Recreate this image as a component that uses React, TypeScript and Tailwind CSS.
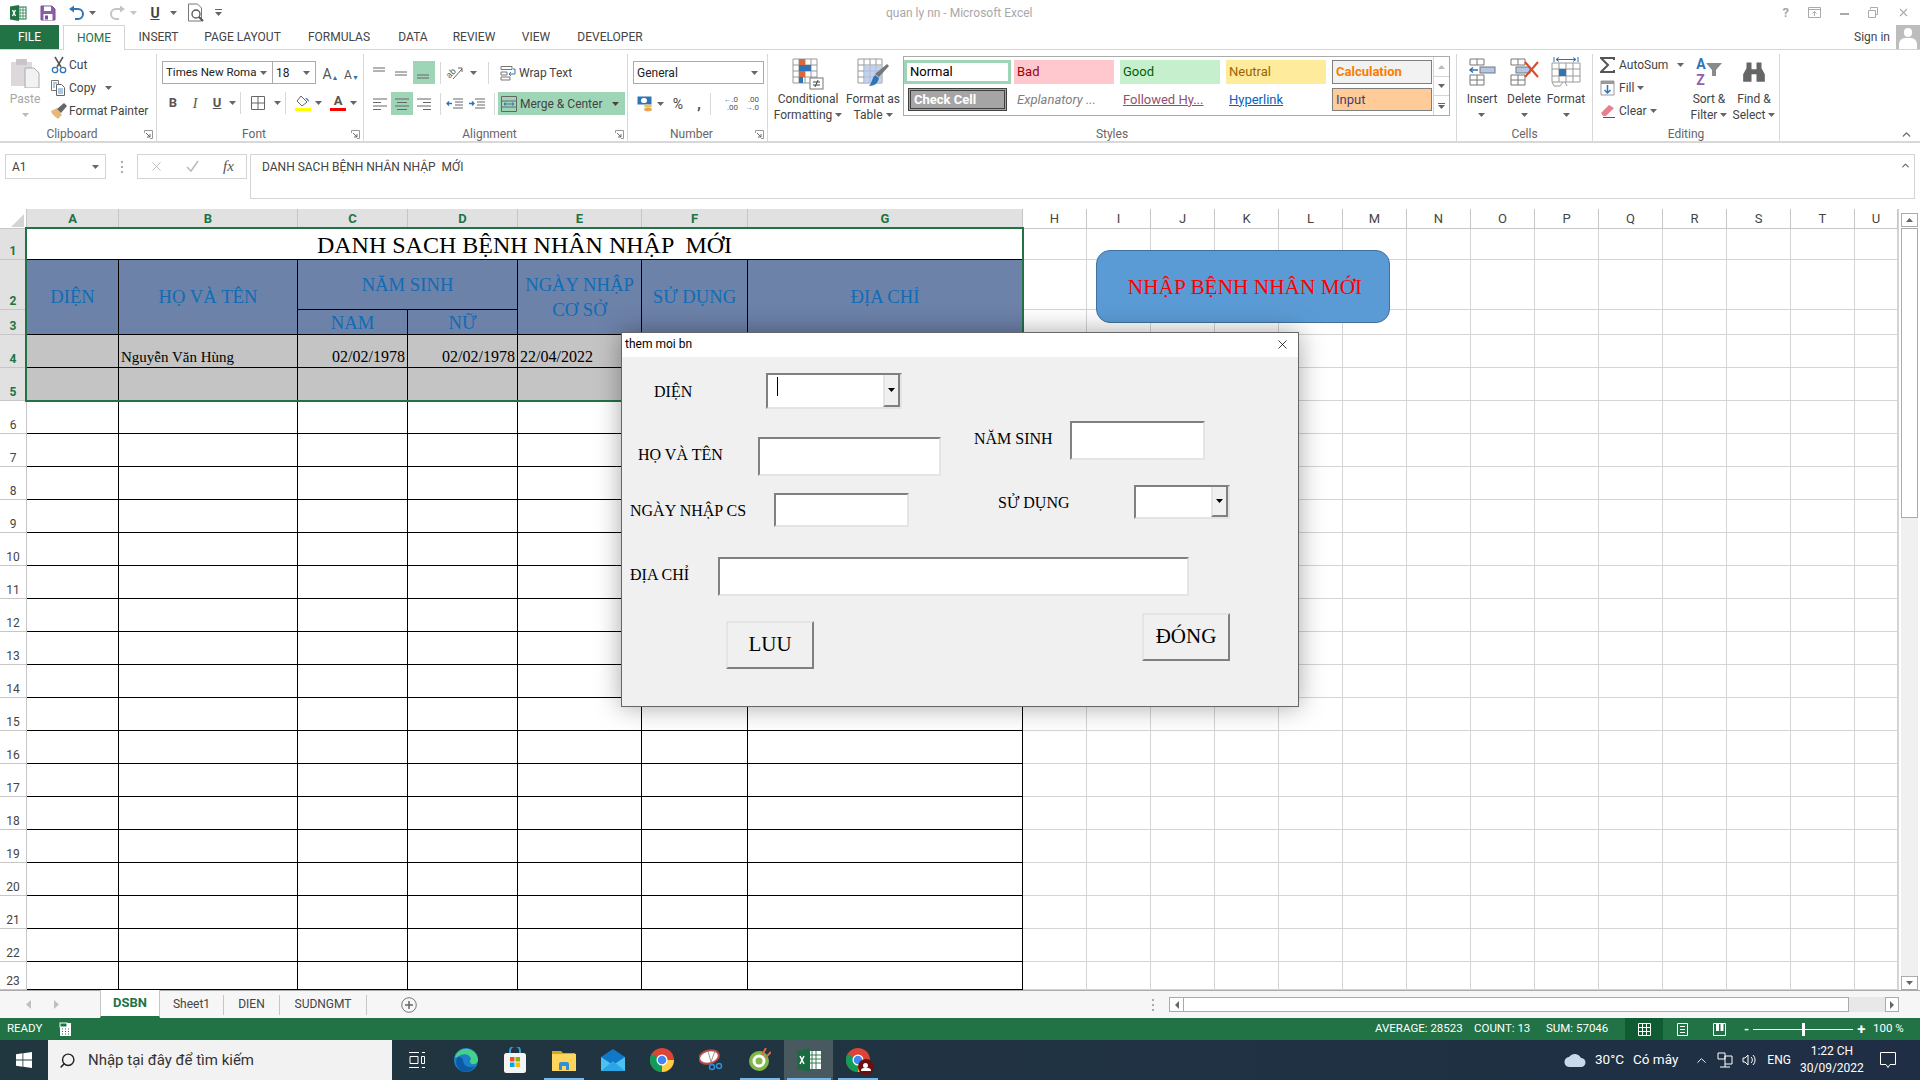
import React from "react";
import { ChevronUp, Search, X as XIcon } from "lucide-react";

const SERIF = "font-['Liberation_Serif',serif]";

function Caret({ c = "#666", className = "" }: { c?: string; className?: string }) {
  return (
    <svg width="7" height="4" viewBox="0 0 7 4" className={"shrink-0 " + className}>
      <path d="M0 0h7L3.5 4z" fill={c} />
    </svg>
  );
}

function Lines({ kind }: { kind: string }) {
  const ys: Record<string, number[][]> = {
    top: [[2, 14, 3], [2, 14, 6]],
    mid: [[2, 14, 7], [2, 14, 10]],
    bot: [[2, 14, 10], [2, 14, 13]],
    left: [[2, 16, 3], [2, 10, 6.5], [2, 16, 10], [2, 10, 13.5]],
    center: [[2, 16, 3], [4, 14, 6.5], [2, 16, 10], [4, 14, 13.5]],
    right: [[2, 16, 3], [8, 16, 6.5], [2, 16, 10], [8, 16, 13.5]],
  };
  return (
    <svg width="18" height="16" viewBox="0 0 18 16">
      {ys[kind].map((l, i) => (
        <path key={i} d={`M${l[0]} ${l[2]}H${l[1]}`} stroke="#666" strokeWidth="1" />
      ))}
    </svg>
  );
}

function Launcher() {
  return (
    <svg width="9" height="9" viewBox="0 0 9 9" className="shrink-0">
      <path d="M.5 3V.5H8.500V8.500H6" fill="none" stroke="#999" />
      <path d="M2 3l4 4M6 4v3H3" fill="none" stroke="#666" />
    </svg>
  );
}

function Group({ w, label, launcher, children }: { w: string; label: string; launcher?: boolean; children: React.ReactNode }) {
  return (
    <div className={w + " mt-1 flex h-[87px] shrink-0 flex-col border-r border-[#d8d8d8]"}>
      <div className="flex h-[73px] min-h-0">{children}</div>
      <div className={"flex h-[14px] items-center " + (launcher ? "pr-[3px]" : "")}>
        <span className="flex-1 text-center text-[12px] leading-[14px] text-[#666]">{label}</span>
        {launcher && <Launcher />}
      </div>
    </div>
  );
}

function Sep({ className = "" }: { className?: string }) {
  return <div className={"h-[22px] w-px shrink-0 bg-[#d8d8d8] " + className} />;
}

function Box({ w, on, children }: { w: string; on?: boolean; children: React.ReactNode }) {
  return (
    <div className={w + " flex h-[23px] shrink-0 items-center justify-center " + (on ? "bg-[#9fd5b7]" : "")}>{children}</div>
  );
}

function BigLabel({ a, b, caret }: { a: string; b?: string; caret?: boolean }) {
  return (
    <div className="flex flex-col items-center text-[12px] leading-[16px] text-[#444]">
      <span className="whitespace-nowrap">{a}</span>
      <span className="flex h-[16px] items-center gap-[3px] whitespace-nowrap">
        {b}
        {caret && <Caret />}
      </span>
    </div>
  );
}

const Logo = () => (
  <svg width="18" height="18" viewBox="0 0 18 18">
    <rect x="8" y="3" width="9" height="12" fill="#fff" stroke="#217346" />
    <path d="M11 3v12M14 3v12M8 6h9M8 9h9M8 12h9" stroke="#217346" strokeWidth=".7" />
    <path d="M1 2.500 10 1v16l-9-1.500z" fill="#217346" />
    <path d="M3.500 6l3 6M6.500 6l-3 6" stroke="#fff" strokeWidth="1.300" />
  </svg>
);

function QuickAccess() {
  return (
    <div className="flex h-[25px] items-center text-[12px]">
      <div className="ml-[9px] w-[30px]"><Logo /></div>
      <svg width="16" height="16" viewBox="0 0 16 16" className="ml-[1px]">
        <path d="M1 1h11l3 3v11H1z" fill="#8b5fa8" stroke="#7b4f9a" />
        <rect x="4" y="1.500" width="7" height="4.500" fill="#fff" />
        <rect x="3.500" y="9" width="9" height="6" fill="#fff" />
        <rect x="5" y="10.500" width="3" height="4" fill="#7b4f9a" />
      </svg>
      <svg width="17" height="16" viewBox="0 0 17 16" className="ml-[12px]">
        <path d="M4 4h6a5 5 0 0 1 0 10H7" fill="none" stroke="#2f75b5" strokeWidth="2" />
        <path d="M1 4l5-3.500v7z" fill="#2f75b5" />
      </svg>
      <Caret className="ml-[4px]" />
      <svg width="17" height="16" viewBox="0 0 17 16" className="ml-[13px]">
        <path d="M13 4H7a5 5 0 0 0 0 10h3" fill="none" stroke="#c4c4c4" strokeWidth="2" />
        <path d="M16 4l-5-3.500v7z" fill="#c4c4c4" />
      </svg>
      <Caret c="#c4c4c4" className="ml-[4px]" />
      <span className="ml-[12px] w-[12px] text-center text-[14px] font-bold leading-[14px] text-[#444] underline">U</span>
      <Caret className="ml-[9px]" />
      <svg width="18" height="20" viewBox="0 0 18 20" className="ml-[10px]">
        <path d="M1.500 1h9l4 4v13h-13z" fill="#fff" stroke="#777" />
        <circle cx="9" cy="11" r="4" fill="#fff" stroke="#555" strokeWidth="1.300" />
        <path d="M12 14l4 4" stroke="#555" strokeWidth="2" />
      </svg>
      <div className="ml-[10px] flex flex-col items-center gap-[2px]">
        <div className="h-px w-[7px] bg-[#666]" />
        <Caret />
      </div>
      <div className="ml-[664px] whitespace-nowrap text-[12px] text-[#a8a8a8]">quan ly nn - Microsoft Excel</div>
      <div className="ml-auto flex items-center gap-[19px] pr-[10px] text-[#a8a8a8]">
        <span className="text-[13px] font-bold">?</span>
        <svg width="13" height="11" viewBox="0 0 13 11"><path d="M.5.5h12v10H.5zM.5 2.500h12M6.500 9V4.500M4.500 6.500l2-2 2 2" fill="none" stroke="#aaa" /></svg>
        <div className="mt-[3px] h-[2px] w-[9px] bg-[#aaa]" />
        <svg width="10" height="11" viewBox="0 0 10 11"><path d="M2.500 2.500V.5h7v7H7.500M.5 3.500h7v7h-7z" fill="none" stroke="#aaa" /></svg>
        <XIcon size={13} color="#aaa" />
      </div>
    </div>
  );
}

function TabsRow() {
  const tabs = ["INSERT", "PAGE LAYOUT", "FORMULAS", "DATA", "REVIEW", "VIEW", "DEVELOPER"];
  const ws = ["w-[67px]", "w-[101px]", "w-[92px]", "w-[56px]", "w-[66px]", "w-[58px]", "w-[90px]"];
  return (
    <div className="flex h-[25px] items-stretch border-b border-[#d4d4d4] text-[12px]">
      <div className="flex w-[59px] items-center justify-center bg-[#217346] text-white">FILE</div>
      <div className="z-10 ml-[4px] flex h-[25px] w-[62px] items-center justify-center border border-b-0 border-[#d4d4d4] bg-white text-[#217346]">HOME</div>
      {tabs.map((t, i) => (
        <div key={t} className={ws[i] + " flex items-center justify-center text-[#444]"}>{t}</div>
      ))}
      <div className="flex flex-1 items-center justify-end text-[#444]">
        <span className="mr-[6px]">Sign in</span>
        <div className="mr-0 flex h-[24px] w-[24px] flex-col items-center overflow-hidden bg-[#bdbdbd]">
          <div className="mt-[3px] h-[10px] w-[8px] rounded-full bg-white" />
          <div className="mt-[1px] h-[12px] w-[18px] rounded-t-[6px] bg-white" />
        </div>
      </div>
    </div>
  );
}

function Clipboard() {
  return (
    <Group w="w-[157px]" label="Clipboard" launcher>
      <div className="flex w-[50px] flex-col items-center pt-[4px] text-[12px] leading-[16px] text-[#a6a6a6]">
        <svg width="30" height="30" viewBox="0 0 30 30" className="shrink-0">
          <rect x="1" y="4" width="21" height="24" fill="#dcd8dc" />
          <rect x="6" y="1" width="11" height="6" rx="1" fill="#c8c4c8" />
          <path d="M15 10h9l5 5v15H15z" fill="#f2f2f2" stroke="#aaa" />
        </svg>
        <span className="mt-[3px]">Paste</span>
        <Caret c="#bbb" className="mt-[6px]" />
      </div>
      <div className="-mt-px flex flex-col text-[12px] text-[#444]">
        <div className="flex h-[23px] items-center">
          <svg width="18" height="18" viewBox="0 0 18 18">
            <path d="M5 1l6 10M13 1L7 11" stroke="#555" strokeWidth="1.500" />
            <circle cx="5" cy="14" r="2.700" fill="none" stroke="#2f75b5" strokeWidth="1.300" />
            <circle cx="13" cy="14" r="2.700" fill="none" stroke="#2f75b5" strokeWidth="1.300" />
          </svg>
          <span className="ml-[1px]">Cut</span>
        </div>
        <div className="flex h-[23px] items-center">
          <svg width="18" height="18" viewBox="0 0 18 18">
            <path d="M1.500 1.500h7v10h-7z" fill="#fff" stroke="#777" />
            <path d="M6.500 5.500h5l3 3v8h-8z" fill="#fff" stroke="#666" />
            <path d="M8 10h5M8 12h5M8 14h5M3 4h4M3 6h2M3 8h2" stroke="#2f75b5" strokeWidth=".8" />
          </svg>
          <span className="ml-[1px]">Copy</span>
          <Caret className="ml-[9px]" />
        </div>
        <div className="flex h-[23px] items-center">
          <svg width="18" height="18" viewBox="0 0 18 18">
            <path d="M1 9l6-3 5 7-4 4C6 15 2 13 1 9z" fill="#e8b77a" />
            <path d="M7 7l7-6 3 3-6 7z" fill="#666" />
          </svg>
          <span className="ml-[1px] whitespace-nowrap">Format Painter</span>
        </div>
      </div>
    </Group>
  );
}

function FontGroup() {
  return (
    <Group w="w-[207px]" label="Font" launcher>
      <div className="flex flex-col pl-[5px] pt-[7px]">
        <div className="flex h-[23px] items-center">
          <div className="flex h-[23px] w-[111px] items-center border border-[#ababab] pl-[3px] pr-[5px] text-[12px] text-[#222]">
            <span className="flex-1 whitespace-nowrap text-[11.500px]">Times New Roma</span>
            <Caret />
          </div>
          <div className="flex h-[23px] w-[43px] items-center border border-l-0 border-[#ababab] pl-[3px] pr-[5px] text-[12px] text-[#222]">
            <span className="flex-1">18</span>
            <Caret />
          </div>
          <div className="ml-[4px] flex h-[23px] w-[21px] items-end justify-center pb-[3px] text-[14px] leading-[14px] text-[#555]">A<sup className="text-[7px] text-[#2f75b5]">▲</sup></div>
          <div className="flex h-[23px] w-[21px] items-end justify-center pb-[3px] text-[12px] leading-[12px] text-[#555]">A<sup className="text-[7px] text-[#2f75b5]">▼</sup></div>
        </div>
        <div className="mt-[8px] flex h-[22px] items-center text-[#555]">
          <Box w="w-[22px]"><span className="text-[13px] font-bold">B</span></Box>
          <Box w="w-[22px]"><span className={"text-[14px] italic " + SERIF}>I</span></Box>
          <Box w="w-[22px]"><span className="text-[13px] font-bold underline">U</span></Box>
          <Caret className="ml-[1px]" />
          <Sep className="ml-[4px]" />
          <Box w="w-[33px]">
            <svg width="14" height="14" viewBox="0 0 14 14"><path d="M.5.5h13v13H.5zM7 .5v13M.5 7h13" fill="none" stroke="#666" /></svg>
          </Box>
          <Caret />
          <Sep className="ml-[4px]" />
          <div className="ml-[9px] flex flex-col items-center">
            <svg width="16" height="12" viewBox="0 0 16 12"><path d="M6 1l6 6-5 4-5-5z" fill="#fff" stroke="#666" /><path d="M10 3c3 0 4 2 4 4z" fill="#2f75b5" /></svg>
            <div className="mt-[1px] h-[3px] w-[16px] bg-[#ffff00]" />
          </div>
          <Caret className="ml-[4px]" />
          <div className="ml-[8px] flex flex-col items-center">
            <span className="text-[13px] font-bold leading-[12px]">A</span>
            <div className="mt-[1px] h-[3px] w-[16px] bg-[#ff0000]" />
          </div>
          <Caret className="ml-[4px]" />
        </div>
      </div>
    </Group>
  );
}

function AlignmentGroup() {
  return (
    <Group w="w-[264px]" label="Alignment" launcher>
      <div className="flex flex-col pl-[5px] pt-[7px] text-[12px] text-[#444]">
        <div className="flex h-[23px] items-center">
          <Box w="w-[22px]"><Lines kind="top" /></Box>
          <Box w="w-[22px]"><Lines kind="mid" /></Box>
          <Box w="w-[22px]" on><Lines kind="bot" /></Box>
          <Sep className="ml-[5px]" />
          <div className="flex h-[23px] w-[28px] shrink-0 items-center pl-[5px]">
            <span className="-rotate-45 text-[9px] leading-[10px] text-[#666]">ab</span>
            <svg width="11" height="15" viewBox="0 0 11 15" className="-ml-[4px] shrink-0">
              <path d="M1 14L10 4M6 3h4v4" fill="none" stroke="#666" />
            </svg>
          </div>
          <Caret className="ml-[1px]" />
          <Sep className="ml-[11px]" />
          <svg width="16" height="16" viewBox="0 0 16 16" className="ml-[11px]">
            <path d="M1 1.500h11v3H1zM1 7h6v3H1zM1 12h9v3H1z" fill="none" stroke="#777" />
            <path d="M13 4h2v5H9M11 7L9 9l2 2" fill="none" stroke="#2f75b5" />
          </svg>
          <span className="ml-[3px]">Wrap Text</span>
        </div>
        <div className="mt-[8px] flex h-[23px] items-center">
          <Box w="w-[22px]"><Lines kind="left" /></Box>
          <Box w="w-[22px]" on><Lines kind="center" /></Box>
          <Box w="w-[22px]"><Lines kind="right" /></Box>
          <Sep className="ml-[5px]" />
          <svg width="18" height="12" viewBox="0 0 18 12" className="ml-[5px]">
            <path d="M7 1h10M9 4h8M9 7h8M7 10h10" stroke="#666" />
            <path d="M6 5.500H1M3 3.500l-2 2 2 2" fill="none" stroke="#2f75b5" strokeWidth="1.300" />
          </svg>
          <svg width="18" height="12" viewBox="0 0 18 12" className="ml-[4px]">
            <path d="M7 1h10M9 4h8M9 7h8M7 10h10" stroke="#666" />
            <path d="M1 5.500h5M4 3.500l2 2-2 2" fill="none" stroke="#2f75b5" strokeWidth="1.300" />
          </svg>
          <Sep className="ml-[8px]" />
          <div className="ml-[3px] flex h-[23px] w-[127px] items-center bg-[#9fd5b7] pl-[3px]">
            <svg width="16" height="16" viewBox="0 0 16 16">
              <path d="M.5.5h15v15H.5zM.5 5h15M.5 11h15" fill="none" stroke="#666" />
              <path d="M3 8h10M5 6.500L3 8l2 1.500M11 6.500L13 8l-2 1.500" fill="none" stroke="#2f75b5" />
            </svg>
            <span className="ml-[3px] whitespace-nowrap">Merge &amp; Center</span>
            <Caret c="#444" className="ml-[10px]" />
          </div>
        </div>
      </div>
    </Group>
  );
}

function NumberGroup() {
  return (
    <Group w="w-[140px]" label="Number" launcher>
      <div className="flex flex-col pl-[5px] pt-[7px] text-[#444]">
        <div className="flex h-[23px] w-[131px] items-center border border-[#ababab] pl-[3px] pr-[5px] text-[12px] text-[#222]">
          <span className="flex-1">General</span>
          <Caret />
        </div>
        <div className="mt-[8px] flex h-[23px] items-center">
          <svg width="18" height="18" viewBox="0 0 18 18" className="ml-[4px]">
            <path d="M.5 1.500h14v8H.5z" fill="#2f75b5" />
            <rect x="4" y="3" width="6" height="5" rx="2.500" fill="#fff" />
            <ellipse cx="11" cy="11" rx="4" ry="1.800" fill="#f0c070" />
            <ellipse cx="11" cy="14.500" rx="4" ry="1.800" fill="#e8a84c" />
          </svg>
          <Caret className="ml-[2px]" />
          <span className="ml-[6px] w-[16px] text-center text-[14px] leading-[14px]">%</span>
          <span className="ml-[8px] w-[10px] text-center text-[14px] font-bold leading-[14px]">,</span>
          <Sep className="ml-[6px]" />
          <div className="ml-[7px] flex w-[20px] flex-col items-end text-[8px] leading-[8px] text-[#555]">
            <span><span className="text-[#2f75b5]">←</span>.0</span>
            <span>.00</span>
          </div>
          <div className="ml-[1px] flex w-[20px] flex-col items-end text-[8px] leading-[8px] text-[#555]">
            <span>.00</span>
            <span><span className="text-[#2f75b5]">→</span>.0</span>
          </div>
        </div>
      </div>
    </Group>
  );
}

function StyleBox({ w, cls, children, ml = "" }: { w: string; cls: string; children: React.ReactNode; ml?: string }) {
  return (
    <div className={w + " " + ml + " flex shrink-0 items-center overflow-hidden whitespace-nowrap pl-[3px] text-[13px] " + cls}>{children}</div>
  );
}

function Styles() {
  return (
    <Group w="w-[689px]" label="Styles">
      <div className="flex w-[80px] flex-col items-center pt-[4px]">
        <svg width="32" height="32" viewBox="0 0 32 32" className="mb-[1px] shrink-0">
          <path d="M1 1h24v24H1zM1 7h24M1 13h24M1 19h24M7 1v24M13 1v24M19 1v24" fill="none" stroke="#999" />
          <rect x="7" y="1" width="6" height="6" fill="#d9683b" />
          <rect x="7" y="7" width="12" height="6" fill="#2f75b5" />
          <rect x="7" y="13" width="6" height="6" fill="#d9683b" />
          <rect x="7" y="19" width="4" height="6" fill="#2f75b5" />
          <rect x="18" y="20" width="13" height="11" fill="#fff" stroke="#777" />
          <path d="M21 24h7M21 27h7M26 22l-3 7" stroke="#444" />
        </svg>
        <BigLabel a="Conditional" b="Formatting" caret />
      </div>
      <div className="flex w-[50px] flex-col items-center pt-[4px]">
        <svg width="32" height="32" viewBox="0 0 32 32" className="mb-[1px] shrink-0">
          <path d="M1 1h24v24H1zM1 7h24M1 13h24M1 19h24M7 1v24M13 1v24M19 1v24" fill="none" stroke="#999" />
          <rect x="7" y="7" width="18" height="18" fill="#b4c7e7" opacity=".8" />
          <path d="M30 6l2 2-10 11-4-3z" fill="#777" />
          <path d="M18 17l4 3c-1 5-4 8-10 8 3-3 3-8 6-11z" fill="#2f75b5" />
        </svg>
        <BigLabel a="Format as" b="Table" caret />
      </div>
      <div className="ml-[5px] mt-[2px] flex h-[60px] w-[547px] border border-[#ababab]">
        <div className="flex w-[528px] flex-col gap-[4px] pt-[3px]">
          <div className="flex h-[24px] gap-[6px]">
            <StyleBox w="w-[107px]" cls="border-[3px] border-[#9fd5b7] bg-white text-black">Normal</StyleBox>
            <StyleBox w="w-[100px]" cls="bg-[#ffc7ce] text-[#9c0006]" ml="-ml-[3px]">Bad</StyleBox>
            <StyleBox w="w-[100px]" cls="bg-[#c6efce] text-[#006100]">Good</StyleBox>
            <StyleBox w="w-[100px]" cls="bg-[#ffeb9c] text-[#9c6500]">Neutral</StyleBox>
            <StyleBox w="w-[100px]" cls="border border-[#7f7f7f] bg-[#f2f2f2] font-bold text-[#fa7d00]">Calculation</StyleBox>
          </div>
          <div className="flex h-[23px] gap-[6px]">
            <StyleBox w="w-[99px]" cls="ml-[4px] border-[3px] border-double border-[#3f3f3f] bg-[#a5a5a5] font-bold text-white">Check Cell</StyleBox>
            <StyleBox w="w-[100px]" cls="ml-[1px] italic text-[#7f7f7f]">Explanatory ...</StyleBox>
            <StyleBox w="w-[100px]" cls="text-[#954f72]"><span className="underline">Followed Hy...</span></StyleBox>
            <StyleBox w="w-[100px]" cls="text-[#0563c1]"><span className="underline">Hyperlink</span></StyleBox>
            <StyleBox w="w-[100px]" cls="border border-[#7f7f7f] bg-[#ffcc99] text-[#3f3f76]">Input</StyleBox>
          </div>
        </div>
        <div className="ml-px flex w-[17px] flex-col border-l border-[#d4d4d4]">
          <div className="flex h-[20px] items-center justify-center border-b border-[#d4d4d4]"><svg width="7" height="4" viewBox="0 0 7 4"><path d="M3.500 0L7 4H0z" fill="#bbb" /></svg></div>
          <div className="flex h-[19px] items-center justify-center border-b border-[#d4d4d4]"><Caret /></div>
          <div className="flex flex-1 flex-col items-center justify-center gap-[1px]"><div className="h-px w-[7px] bg-[#666]" /><Caret /></div>
        </div>
      </div>
    </Group>
  );
}

function CellsGroup() {
  return (
    <Group w="w-[136px]" label="Cells">
      <div className="flex pl-[4px]">
        <div className="flex w-[42px] flex-col items-center pt-[4px]">
          <svg width="28" height="28" viewBox="0 0 28 28" className="mb-[5px] shrink-0">
            <path d="M2 1h14v6H2zM9 1v6M2 17h14v10H2zM9 17v10M2 22h14" fill="none" stroke="#777" />
            <rect x="12" y="9" width="15" height="6" fill="#b4c7e7" stroke="#777" />
            <path d="M10 12H2M5 9.500L2 12l3 2.500" fill="none" stroke="#2f75b5" strokeWidth="1.500" />
          </svg>
          <BigLabel a="Insert" caret />
        </div>
        <div className="flex w-[42px] flex-col items-center pt-[4px]">
          <svg width="30" height="28" viewBox="0 0 30 28" className="mb-[5px] shrink-0">
            <path d="M2 1h14v6H2zM9 1v6M2 17h14v10H2zM9 17v10M2 22h14" fill="none" stroke="#777" />
            <rect x="7" y="9" width="14" height="6" fill="#b4c7e7" stroke="#777" />
            <path d="M16 4l13 15M29 4L16 19" stroke="#d9482b" strokeWidth="2" />
          </svg>
          <BigLabel a="Delete" caret />
        </div>
        <div className="flex w-[42px] flex-col items-center pt-[2px]">
          <svg width="30" height="31" viewBox="0 0 30 31" className="mb-[4px] shrink-0">
            <path d="M3 1v5M27 1v5M5 3.500h20M5 3.500l3-2M5 3.500l3 2M25 3.500l-3-2M25 3.500l-3 2" fill="none" stroke="#2f75b5" />
            <path d="M1 7h28v19H1zM1 13h28M1 20h28M8 7v19M15 7v19M22 7v19" fill="none" stroke="#999" />
            <rect x="8" y="13" width="7" height="7" fill="#2f75b5" />
            <path d="M1 26l2 4h6l3-4M14 26l2 4" fill="none" stroke="#999" />
          </svg>
          <BigLabel a="Format" caret />
        </div>
      </div>
    </Group>
  );
}

function Editing() {
  return (
    <Group w="w-[187px]" label="Editing">
      <div className="-mt-px flex w-[94px] flex-col pl-[7px] text-[12px] text-[#444]">
        <div className="flex h-[23px] items-center">
          <svg width="16" height="16" viewBox="0 0 16 16" className="mr-[3px]"><path d="M14 3V1H1l7 7-7 7h13v-2" fill="none" stroke="#555" strokeWidth="2" /></svg>
          <span>AutoSum</span>
          <Caret className="ml-[9px]" />
        </div>
        <div className="flex h-[23px] items-center">
          <svg width="16" height="16" viewBox="0 0 16 16" className="mr-[3px]">
            <path d="M1 1h13v14H1z" fill="#fff" stroke="#999" /><rect x="1" y="1" width="13" height="3" fill="#999" />
            <path d="M7.500 5v8M4.500 10l3 3 3-3" fill="none" stroke="#2f75b5" strokeWidth="1.500" />
          </svg>
          <span>Fill</span>
          <Caret className="ml-[3px]" />
        </div>
        <div className="flex h-[23px] items-center">
          <svg width="16" height="16" viewBox="0 0 16 16" className="mr-[3px]">
            <path d="M1 10l8-8 5 3-8 8H3z" fill="#e8808f" />
            <path d="M3 14.500h12" stroke="#555" />
          </svg>
          <span>Clear</span>
          <Caret className="ml-[3px]" />
        </div>
      </div>
      <div className="flex w-[44px] flex-col items-center pt-[2px]">
        <div className="mb-[3px] flex h-[32px] shrink-0 items-center">
          <div className="flex flex-col text-[14px] font-bold leading-[16px]">
            <span className="text-[#2f75b5]">A</span>
            <span className="text-[#8f5fb5]">Z</span>
          </div>
          <svg width="16" height="16" viewBox="0 0 16 16" className="-mt-[5px]"><path d="M0 1h16l-6 7v6H6V8z" fill="#8a8a8a" /></svg>
        </div>
        <BigLabel a="Sort &" b="Filter" caret />
      </div>
      <div className="flex w-[46px] flex-col items-center pt-[6px]">
        <svg width="26" height="25" viewBox="0 0 28 30" className="mb-[6px] shrink-0">
          <path d="M5 3h6v8h6V3h6v7l4 7v9h-10v-9h-6v9H1v-9l4-7z" fill="#666" />
        </svg>
        <BigLabel a="Find &" b="Select" caret />
      </div>
    </Group>
  );
}

function Ribbon() {
  return (
    <div className="flex h-[93px] border-b-2 border-[#d8d8d8] bg-white">
      <Clipboard />
      <FontGroup />
      <AlignmentGroup />
      <NumberGroup />
      <Styles />
      <CellsGroup />
      <Editing />
      <div className="flex flex-1 items-end justify-end pr-[7px]">
        <ChevronUp size={13} color="#666" strokeWidth={2.5} />
      </div>
    </div>
  );
}

function FormulaBar() {
  return (
    <div className="flex h-[66px] items-start bg-white pl-[5px] pt-[11px] text-[#444]">
      <div className="flex h-[25px] w-[101px] items-center border border-[#d4d4d4] pl-[6px] pr-[6px] text-[12px]">
        <span className="flex-1">A1</span>
        <Caret />
      </div>
      <div className="flex h-[25px] w-[31px] flex-col items-center justify-center gap-[3px]">
        <div className="h-[2px] w-[2px] bg-[#aaa]" />
        <div className="h-[2px] w-[2px] bg-[#aaa]" />
        <div className="h-[2px] w-[2px] bg-[#aaa]" />
      </div>
      <div className="flex h-[25px] w-[110px] items-center border border-[#d4d4d4] pl-[11px] text-[#bbb]">
        <XIcon size={15} strokeWidth={1.5} />
        <svg width="15" height="13" viewBox="0 0 15 13" className="ml-[21px]"><path d="M2 7l4 4 7-10" fill="none" stroke="#bbb" strokeWidth="1.500" /></svg>
        <span className={"ml-[23px] text-[15px] italic text-[#555] " + SERIF}>fx</span>
      </div>
      <div className="ml-[3px] flex h-[45px] w-[1665px] items-start border border-[#d4d4d4] pl-[11px] pr-[3px] pt-[3px] text-[12px]">
        <span className="flex-1 whitespace-pre">DANH SACH BỆNH NHÂN NHẬP  MỚI</span>
        <ChevronUp size={11} color="#666" strokeWidth={2.5} className="mt-[2px]" />
      </div>
    </div>
  );
}

const LETTERS_ON = ["A", "B", "C", "D", "E", "F", "G"];
const LETTERS_OFF = ["H", "I", "J", "K", "L", "M", "N", "O", "P", "Q", "R", "S", "T", "U"];
const BK = "border-r border-b border-black";
const HEAD = "flex items-center justify-center bg-[#6d82a9] text-center text-[18.67px] leading-[25px] text-[#0f6cb5] " + SERIF + " " + BK;
const DATA = "bg-[#c4c4c4] text-[16px] leading-[20px] text-black flex items-end " + SERIF + " " + BK;

function Plain() {
  return <>{LETTERS_OFF.map((l) => <div key={l} className="border-b border-r border-[#d4d4d4]" />)}</>;
}

function RowHead({ n, on }: { n: number; on?: boolean }) {
  return (
    <div className={"flex items-end justify-center border-b border-r border-[#c6c6c6] pb-[1px] text-[12px] leading-[14px] " + (on ? "bg-[#e1e1e1] font-bold text-[#217346]" : "bg-white text-[#444]")}>
      {n}
    </div>
  );
}

function Sheet() {
  const rows = Array.from({ length: 18 }, (_, i) => i + 6);
  return (
    <div className="relative flex h-[781px]">
      <div className="h-[781px] w-[1898px] overflow-hidden">
        <div className="grid grid-cols-[27px_92px_179px_110px_110px_124px_106px_275px_repeat(13,64px)_43px] grid-rows-[20px_31px_50px_25px_repeat(19,33px)_28px]">
          <div className="flex items-end justify-end border-b border-r border-[#c6c6c6] bg-white">
            <svg width="13" height="13" viewBox="0 0 13 13" className="mb-[1px] mr-[2px]"><path d="M13 0v13H0z" fill="#d4d4d4" /></svg>
          </div>
          {LETTERS_ON.map((l) => (
            <div key={l} className="flex items-center justify-center border-b border-r border-[#c6c6c6] bg-[#e1e1e1] text-[13px] font-bold text-[#217346]">{l}</div>
          ))}
          {LETTERS_OFF.map((l) => (
            <div key={l} className="flex items-center justify-center border-b border-r border-[#c6c6c6] bg-white text-[13px] text-[#444]">{l}</div>
          ))}

          <RowHead n={1} on />
          <div className={"col-span-7 flex items-center justify-center whitespace-pre bg-white pt-[1px] text-[24px] leading-[28px] text-black " + SERIF + " " + BK}>DANH SACH BỆNH NHÂN NHẬP  MỚI</div>
          <Plain />

          <RowHead n={2} on />
          <div className={"row-span-2 pb-[2px] " + HEAD}>DIỆN</div>
          <div className={"row-span-2 pb-[2px] " + HEAD}>HỌ VÀ TÊN</div>
          <div className={"col-span-2 " + HEAD}>NĂM SINH</div>
          <div className={"row-span-2 " + HEAD}>NGÀY NHẬP<br />CƠ SỞ</div>
          <div className={"row-span-2 pb-[2px] " + HEAD}>SỬ DỤNG</div>
          <div className={"row-span-2 pb-[2px] " + HEAD}>ĐỊA CHỈ</div>
          <Plain />

          <RowHead n={3} on />
          <div className={HEAD}>NAM</div>
          <div className={HEAD}>NỮ</div>
          <Plain />

          <RowHead n={4} on />
          <div className={"bg-[#c4c4c4] " + BK} />
          <div className={DATA + " pl-[2px] !text-[15px]"}>Nguyễn Văn Hùng</div>
          <div className={DATA + " justify-end pr-[2px]"}>02/02/1978</div>
          <div className={DATA + " justify-end pr-[2px]"}>02/02/1978</div>
          <div className={DATA + " pl-[2px]"}>22/04/2022</div>
          <div className={"bg-[#c4c4c4] " + BK} />
          <div className={"bg-[#c4c4c4] " + BK} />
          <Plain />

          <RowHead n={5} on />
          {LETTERS_ON.map((l) => <div key={l} className={"bg-[#c4c4c4] " + BK} />)}
          <Plain />

          {rows.map((n) => (
            <React.Fragment key={n}>
              <RowHead n={n} />
              {LETTERS_ON.map((l) => <div key={l} className={"bg-white " + BK} />)}
              <Plain />
            </React.Fragment>
          ))}
        </div>
      </div>
      <div className="flex w-[22px] flex-col border-l border-[#d4d4d4] bg-white px-[2px] pt-[4px]">
        <div className="flex h-[14px] items-center justify-center border border-[#ababab]"><svg width="7" height="4" viewBox="0 0 7 4"><path d="M3.500 0L7 4H0z" fill="#666" /></svg></div>
        <div className="mt-[1px] h-[290px] border border-[#ababab] bg-white" />
        <div className="flex-1 bg-[#f0f0f0]" />
        <div className="flex h-[14px] items-center justify-center border border-[#ababab]"><Caret /></div>
      </div>

      <div className="pointer-events-none absolute left-[25px] top-[18px] h-[175px] w-[999px] border-2 border-[#217346]" />

      <div className={"absolute left-[1096px] top-[41px] flex h-[73px] w-[294px] items-center justify-center rounded-[14px] border border-[#41719c] bg-[#5b9bd5] pl-[4px] pt-[3px] text-[21.33px] text-[#ff0000] " + SERIF}>
        NHẬP BỆNH NHÂN MỚI
      </div>
    </div>
  );
}

function TabStrip() {
  return (
    <div className="flex h-[28px] items-stretch border-t border-[#ababab] bg-[#f6f6f6] text-[12px] text-[#444]">
      <div className="flex w-[100px] items-center pl-[26px] text-[#c0c0c0]">
        <svg width="5" height="9" viewBox="0 0 5 9"><path d="M5 0v9L0 4.500z" fill="#c0c0c0" /></svg>
        <svg width="5" height="9" viewBox="0 0 5 9" className="ml-[23px]"><path d="M0 0v9l5-4.500z" fill="#c0c0c0" /></svg>
      </div>
      <div className="-mt-px flex h-[28px] w-[60px] items-center justify-center border-b-2 border-l border-r border-[#c6c6c6] border-b-[#217346] bg-white pb-[1px] text-[13px] font-bold text-[#217346]">DSBN</div>
      <div className="flex h-[20px] w-[64px] items-center justify-center self-center border-r border-[#c6c6c6] pb-[2px]">Sheet1</div>
      <div className="flex h-[20px] w-[56px] items-center justify-center self-center border-r border-[#c6c6c6] pb-[2px]">DIEN</div>
      <div className="flex h-[20px] w-[87px] items-center justify-center self-center border-r border-[#c6c6c6] pb-[2px]">SUDNGMT</div>
      <div className="flex w-[84px] items-center justify-center">
        <svg width="16" height="16" viewBox="0 0 16 16"><circle cx="8" cy="8" r="7.300" fill="none" stroke="#777" /><path d="M8 4v8M4 8h8" stroke="#666" strokeWidth="1.500" /></svg>
      </div>
      <div className="ml-[694px] flex w-[16px] flex-col items-center justify-center gap-[3px]">
        <div className="h-[2px] w-[2px] bg-[#aaa]" /><div className="h-[2px] w-[2px] bg-[#aaa]" /><div className="h-[2px] w-[2px] bg-[#aaa]" />
      </div>
      <div className="ml-[8px] flex h-[15px] w-[730px] self-center">
        <div className="flex w-[15px] items-center justify-center border border-[#ababab] bg-white"><svg width="4" height="8" viewBox="0 0 4 8"><path d="M4 0v8L0 4z" fill="#666" /></svg></div>
        <div className="w-[665px] border border-l-0 border-[#ababab] bg-white" />
        <div className="flex-1 bg-[#e8e8e8]" />
        <div className="flex w-[14px] items-center justify-center border border-[#ababab] bg-white"><svg width="4" height="8" viewBox="0 0 4 8"><path d="M0 0v8l4-4z" fill="#666" /></svg></div>
      </div>
    </div>
  );
}

function StatusBar() {
  return (
    <div className="flex h-[22px] items-center bg-[#217346] text-[11.500px] text-white">
      <span className="ml-[7px] w-[52px]">READY</span>
      <svg width="13" height="15" viewBox="0 0 13 15"><rect x="1" y="1" width="11" height="13" fill="#fff" /><rect x="1" y="1" width="7" height="4" fill="#217346" stroke="#fff" /><path d="M3 7h1M6 7h1M9 7h1M3 9.500h1M6 9.500h1M9 9.500h1M3 12h1M6 12h1M9 12h1" stroke="#217346" /></svg>
      <span className="ml-[1303px] w-[99px] whitespace-nowrap">AVERAGE: 28523</span>
      <span className="w-[72px] whitespace-nowrap">COUNT: 13</span>
      <span className="w-[79px] whitespace-nowrap">SUM: 57046</span>
      <div className="flex h-[22px] w-[38px] items-center justify-center bg-[#0f5c33]">
        <svg width="13" height="13" viewBox="0 0 13 13"><path d="M.5.5h12v12H.5zM4.500.5v12M8.500.5v12M.5 4.500h12M.5 8.500h12" fill="none" stroke="#fff" /></svg>
      </div>
      <div className="flex w-[38px] justify-center">
        <svg width="11" height="13" viewBox="0 0 11 13"><path d="M.5.5h10v12H.5zM3 3.500h5M3 6.500h5M3 9.500h5" fill="none" stroke="#fff" /></svg>
      </div>
      <div className="flex w-[37px] justify-center">
        <svg width="13" height="13" viewBox="0 0 13 13"><path d="M.5.5h12v12H.5z" fill="none" stroke="#fff" /><path d="M3 1h3v7H3zM7.500 1h3v7h-3z" fill="#fff" /></svg>
      </div>
      <div className="ml-[6px] flex w-[124px] items-center">
        <span className="text-[13px] font-bold leading-[13px]">-</span>
        <div className="relative ml-[4px] h-px w-[100px] bg-white">
          <div className="absolute -top-[6px] left-[49px] h-[13px] w-[3px] bg-white" />
        </div>
        <span className="ml-[4px] text-[15px] font-bold leading-[15px]">+</span>
      </div>
      <span className="ml-[5px] whitespace-nowrap">100 %</span>
    </div>
  );
}

function Slot({ under, active, children }: { under?: boolean; active?: boolean; children: React.ReactNode }) {
  return (
    <div className={"relative flex h-[40px] w-[49px] shrink-0 items-center justify-center " + (active ? "bg-[#48595f]" : "")}>
      {children}
      {under && <div className={(active ? "w-[44px]" : "w-[40px]") + " absolute bottom-0 left-1/2 h-[2px] -translate-x-1/2 bg-[#76b9ed]"} />}
    </div>
  );
}

const Chrome = () => (
  <svg width="24" height="24" viewBox="0 0 24 24">
    <circle cx="12" cy="12" r="12" fill="#db4437" />
    <path d="M12 12L1.600 18A12 12 0 0 1 1.600 6z" fill="#0f9d58" />
    <path d="M12 12l-10.400 6A12 12 0 0 0 12 24z" fill="#0f9d58" />
    <path d="M12 12h12A12 12 0 0 1 12 24z" fill="#ffcd40" />
    <circle cx="12" cy="12" r="5.500" fill="#fff" />
    <circle cx="12" cy="12" r="4.300" fill="#4285f4" />
  </svg>
);

function Taskbar() {
  return (
    <div className="flex h-[40px] items-center bg-gradient-to-r from-[#21373f] to-[#1f2e45] text-white">
      <div className="flex w-[48px] justify-center">
        <svg width="16" height="16" viewBox="0 0 16 16"><path d="M0 2.200l6.500-.9v6.300H0zM7.300 1.200L16 0v7.600H7.300zM0 8.400h6.500v6.300L0 13.800zM7.300 8.400H16V16l-8.700-1.200z" fill="#fff" /></svg>
      </div>
      <div className="flex h-[40px] w-[344px] items-center bg-[#f2f2f2] pl-[11px] text-[15px] text-[#333]">
        <Search size={17} color="#222" className="-scale-x-100" />
        <span className="ml-[12px] whitespace-nowrap">Nhập tại đây để tìm kiếm</span>
      </div>
      <Slot>
        <svg width="16" height="16" viewBox="0 0 16 16"><path d="M0 .5h10M0 15.500h10M13 .5h3M13 15.500h3M1 4.500h8v7H1zM12.500 4.500h3v7h-3z" fill="none" stroke="#fff" /></svg>
      </Slot>
      <Slot>
        <svg width="24" height="24" viewBox="0 0 24 24">
          <circle cx="12" cy="12" r="12" fill="#1b7fc9" />
          <path d="M1 9c2-6 8-9 13-8 6 1 10 6 10 11 0 3-3 5-6 4-3-1-2-4-1-5-1-4-6-6-10-4-3 1-5 4-6 2z" fill="#44d18a" />
          <path d="M9 12c0 6 6 9 12 6-3 5-9 7-13 5-5-2-7-8-5-13 2-2 5-1 6 2z" fill="#0c59a4" />
        </svg>
      </Slot>
      <Slot>
        <svg width="24" height="26" viewBox="0 0 24 26">
          <path d="M7 7V4a5 5 0 0 1 10 0v3" fill="none" stroke="#29a3e0" strokeWidth="2" />
          <rect x="1" y="6" width="22" height="20" rx="2.500" fill="#f4f4f4" />
          <rect x="7" y="10" width="4.500" height="4.500" fill="#f25022" />
          <rect x="12.500" y="10" width="4.500" height="4.500" fill="#7fba00" />
          <rect x="7" y="15.500" width="4.500" height="4.500" fill="#00a4ef" />
          <rect x="12.500" y="15.500" width="4.500" height="4.500" fill="#ffb900" />
        </svg>
      </Slot>
      <Slot under>
        <svg width="24" height="22" viewBox="0 0 24 22">
          <path d="M0 2h9l2 2h12v3H0z" fill="#d9a520" />
          <rect x="0" y="5" width="24" height="17" fill="#ffd65c" />
          <path d="M7 21v-6a2 2 0 0 1 2-2h6a2 2 0 0 1 2 2v6h-3v-4h-4v4z" fill="#2f8fd8" />
        </svg>
      </Slot>
      <Slot>
        <svg width="24" height="22" viewBox="0 0 24 22">
          <path d="M12 0L0 8v14h24V8z" fill="#0f78c8" />
          <path d="M0 8l12 8 12-8v14H0z" fill="#4cc2f1" />
          <path d="M0 22l12-10 12 10z" fill="#2aa6e6" />
        </svg>
      </Slot>
      <Slot><Chrome /></Slot>
      <Slot>
        <svg width="24" height="24" viewBox="0 0 24 24">
          <ellipse cx="10" cy="9" rx="10" ry="6.500" fill="#fff" stroke="#b94a4a" strokeWidth="2" transform="rotate(-15 10 9)" />
          <path d="M9 3l3 11M16 3l-4 11" stroke="#999" />
          <circle cx="13" cy="19" r="2.500" fill="none" stroke="#2f8fd8" strokeWidth="1.500" />
          <circle cx="20" cy="18" r="2.500" fill="none" stroke="#2f8fd8" strokeWidth="1.500" />
        </svg>
      </Slot>
      <Slot under>
        <svg width="22" height="24" viewBox="0 0 22 24">
          <circle cx="10" cy="13" r="10" fill="#7fb848" />
          <circle cx="10" cy="13" r="6.500" fill="#fff" />
          <circle cx="10" cy="13" r="3.500" fill="#7fb848" />
          <path d="M13 7l4-7M17 9l5-5" stroke="#e06a3b" strokeWidth="2" />
        </svg>
      </Slot>
      <Slot under active>
        <svg width="26" height="24" viewBox="0 0 26 24">
          <rect x="12" y="3" width="13" height="18" fill="#fff" />
          <path d="M16 3v18M20 3v18M12 7h13M12 11h13M12 15h13" stroke="#217346" strokeWidth=".9" />
          <path d="M1 3l13-3v24L1 21z" fill="#1b6b41" />
          <path d="M4 8l4 8M8 8l-4 8" stroke="#fff" strokeWidth="1.500" />
        </svg>
      </Slot>
      <Slot under>
        <div className="relative h-[24px] w-[24px]">
          <Chrome />
          <div className="absolute -bottom-[3px] -right-[4px] flex h-[16px] w-[16px] flex-col items-center justify-center rounded-full bg-[#6b1010]">
            <div className="h-[5px] w-[5px] rounded-full bg-white" />
            <div className="h-[3px] w-[10px] rounded-t-[3px] bg-white" />
          </div>
        </div>
      </Slot>
      <div className="ml-[682px] flex items-center text-[13.500px] leading-none text-white">
        <svg width="22" height="16" viewBox="0 0 22 16"><path d="M6 15a5 5 0 0 1-1-10 7 7 0 0 1 12 1 4.500 4.500 0 0 1 0 9z" fill="#c8d9ec" /></svg>
        <span className="ml-[9px] whitespace-nowrap">30°C</span>
        <span className="ml-[9px] whitespace-nowrap">Có mây</span>
      </div>
      <ChevronUp size={15} className="ml-[16px]" strokeWidth={1.5} />
      <svg width="16" height="16" viewBox="0 0 16 16" className="ml-[8px]"><path d="M1 1h7v6H1zM8 4h7v8H8zM3 15h10M8 12v3" fill="none" stroke="#fff" /></svg>
      <svg width="15" height="14" viewBox="0 0 15 14" className="ml-[9px]"><path d="M1 5v4h2l3 3V2L3 5zM9 4a4 4 0 0 1 0 6M11 2a7 7 0 0 1 0 10" fill="none" stroke="#fff" /></svg>
      <span className="ml-[10px] whitespace-nowrap text-[12px]">ENG</span>
      <div className="ml-[11px] flex w-[60px] flex-col items-center text-[12px] leading-[17px]">
        <span>1:22 CH</span>
        <span>30/09/2022</span>
      </div>
      <svg width="16" height="17" viewBox="0 0 16 17" className="ml-[18px]"><path d="M.5.5h15v12H10l-2 3-2-3H.5z" fill="none" stroke="#fff" /></svg>
    </div>
  );
}

function Label({ w, ml = "", children }: { w: string; ml?: string; children: React.ReactNode }) {
  return <div className={w + " " + ml + " flex shrink-0 items-center whitespace-nowrap text-[16px] leading-[20px] text-black"}>{children}</div>;
}

const SUNK = "border-2 border-b-[#e4e4e4] border-l-[#808080] border-r-[#e4e4e4] border-t-[#808080] bg-white";

function Combo({ w, h, cursor }: { w: string; h: string; cursor?: boolean }) {
  return (
    <div className={w + " " + h + " flex shrink-0 " + SUNK}>
      <div className="flex-1 pl-[9px] pt-[2px]">{cursor && <div className="h-[19px] w-px bg-black" />}</div>
      <div className="flex w-[17px] items-center justify-center border-b-2 border-l-2 border-r-2 border-t-0 border-b-[#808080] border-l-[#e4e4e4] border-r-[#808080] bg-[#f0f0f0]">
        <Caret c="#000" />
      </div>
    </div>
  );
}

function Btn({ cls, children }: { cls: string; children: React.ReactNode }) {
  return (
    <div className={cls + " flex h-[48px] w-[88px] shrink-0 items-center justify-center border-2 border-b-[#808080] border-l-[#e4e4e4] border-r-[#808080] border-t-[#e4e4e4] bg-[#f0f0f0] text-[21px] text-black"}>
      {children}
    </div>
  );
}

function Dialog() {
  return (
    <div className={"absolute left-[621px] top-[332px] h-[375px] w-[678px] border border-[#666] bg-[#f0f0f0] shadow-[0_0_24px_rgba(0,0,0,0.35)] " + SERIF}>
      <div className="flex h-[24px] items-center justify-between bg-white pb-[2px] pl-[3px] pr-[8px] font-['Roboto',sans-serif] text-[12px] text-black">
        <span>them moi bn</span>
        <XIcon size={15} strokeWidth={1.2} />
      </div>
      <div className="flex h-[170px]">
        <div className="flex w-[352px] shrink-0 flex-col">
          <div className="mt-[16px] flex h-[36px]">
            <Label w="w-[112px]" ml="ml-[32px]"><span className="mt-[1px]">DIỆN</span></Label>
            <Combo w="w-[136px]" h="h-[36px]" cursor />
          </div>
          <div className="mt-[28px] flex h-[39px]">
            <Label w="w-[120px]" ml="ml-[16px]"><span className="-mt-[4px]">HỌ VÀ TÊN</span></Label>
            <div className={"h-[39px] w-[183px] " + SUNK} />
          </div>
          <div className="mt-[17px] flex h-[34px]">
            <Label w="w-[144px]" ml="ml-[8px]"><span className="mt-[2px]">NGÀY NHẬP CS</span></Label>
            <div className={"h-[34px] w-[135px] " + SUNK} />
          </div>
        </div>
        <div className="flex flex-col">
          <div className="mt-[64px] flex h-[39px]">
            <Label w="w-[96px]"><span className="-mt-[4px]">NĂM SINH</span></Label>
            <div className={"h-[39px] w-[135px] " + SUNK} />
          </div>
          <div className="mt-[25px] flex h-[34px]">
            <Label w="w-[136px]" ml="ml-[24px]"><span className="mt-[2px]">SỬ DỤNG</span></Label>
            <Combo w="w-[96px]" h="h-[34px]" />
          </div>
        </div>
      </div>
      <div className="mt-[30px] flex h-[39px]">
        <Label w="w-[88px]" ml="ml-[8px]"><span className="-mt-[4px]">ĐỊA CHỈ</span></Label>
        <div className={"h-[39px] w-[471px] " + SUNK} />
      </div>
      <div className="flex items-start">
        <Btn cls="ml-[104px] mt-[25px]">LUU</Btn>
        <Btn cls="ml-[328px] mt-[17px]">ĐÓNG</Btn>
      </div>
    </div>
  );
}

export default function App() {
  return (
    <div className="relative h-[1080px] w-[1920px] overflow-hidden bg-white font-['Roboto',sans-serif]">
      <QuickAccess />
      <TabsRow />
      <Ribbon />
      <FormulaBar />
      <Sheet />
      <TabStrip />
      <StatusBar />
      <Taskbar />
      <Dialog />
    </div>
  );
}
